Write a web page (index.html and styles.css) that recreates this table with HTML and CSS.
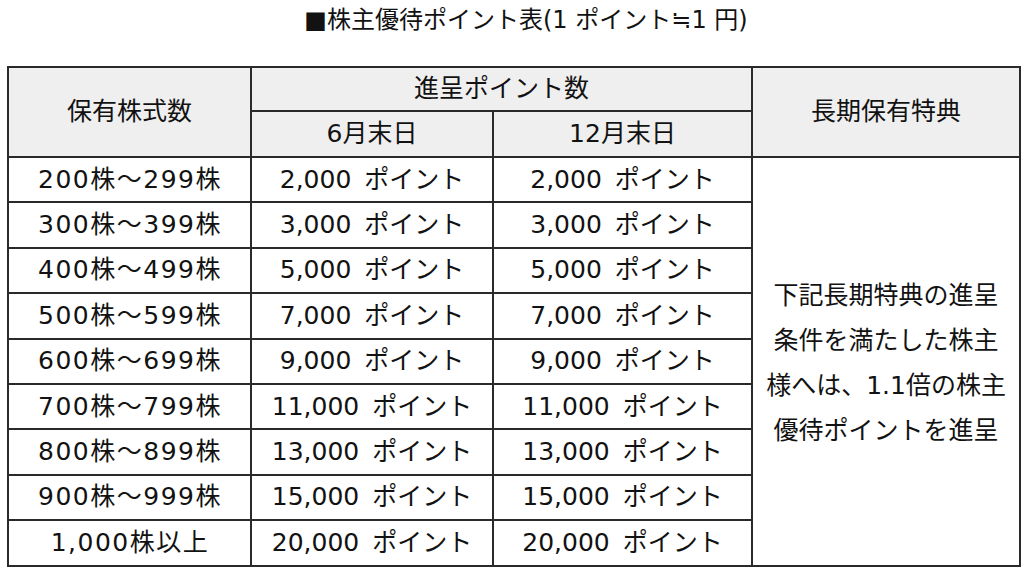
FILE: index.html
```html
<!DOCTYPE html>
<html lang="ja">
<head>
<meta charset="utf-8">
<link rel="stylesheet" href="styles.css">
</head>
<body>
<h1 class="title">■株主優待ポイント表(1 ポイント≒1 円)</h1>
<table class="points">
  <colgroup>
    <col class="c1"><col class="c2"><col class="c3"><col class="c4">
  </colgroup>
  <thead>
    <tr class="h1">
      <th rowspan="2">保有株式数</th>
      <th colspan="2">進呈ポイント数</th>
      <th rowspan="2">長期保有特典</th>
    </tr>
    <tr class="h2">
      <th>6月末日</th>
      <th>12月末日</th>
    </tr>
  </thead>
  <tbody>
    <tr><td class="qty">200株～299株</td><td class="pt">2,000 ポイント</td><td class="pt">2,000 ポイント</td>
      <td rowspan="9" class="bonus">下記長期特典の進呈<br>条件を満たした株主<br>様へは、1.1倍の株主<br>優待ポイントを進呈</td></tr>
    <tr><td class="qty">300株～399株</td><td class="pt">3,000 ポイント</td><td class="pt">3,000 ポイント</td></tr>
    <tr><td class="qty">400株～499株</td><td class="pt">5,000 ポイント</td><td class="pt">5,000 ポイント</td></tr>
    <tr><td class="qty">500株～599株</td><td class="pt">7,000 ポイント</td><td class="pt">7,000 ポイント</td></tr>
    <tr><td class="qty">600株～699株</td><td class="pt">9,000 ポイント</td><td class="pt">9,000 ポイント</td></tr>
    <tr><td class="qty">700株～799株</td><td class="pt">11,000 ポイント</td><td class="pt">11,000 ポイント</td></tr>
    <tr><td class="qty">800株～899株</td><td class="pt">13,000 ポイント</td><td class="pt">13,000 ポイント</td></tr>
    <tr><td class="qty">900株～999株</td><td class="pt">15,000 ポイント</td><td class="pt">15,000 ポイント</td></tr>
    <tr><td class="qty">1,000株以上</td><td class="pt">20,000 ポイント</td><td class="pt">20,000 ポイント</td></tr>
  </tbody>
</table>
</body>
</html>
```
FILE: styles.css
```css
html, body {
  margin: 0;
  padding: 0;
  background: #ffffff;
}
body {
  font-family: "DejaVu Sans", "Noto Sans CJK JP", sans-serif;
  color: #121212;
}
.title {
  margin: 0;
  padding-top: 5px;
  height: 66px;
  box-sizing: border-box;
  text-align: center;
  font-size: 24px;
  font-weight: 400;
  line-height: 30px;
  padding-left: 28px;
}
.points {
  margin-left: 7px;
  width: 1012px;
  border-collapse: collapse;
  table-layout: fixed;
  font-size: 25px;
}
.c1 { width: 243px; }
.c2 { width: 242px; }
.c3 { width: 259px; }
.c4 { width: 268px; }
.points th, .points td {
  border: 2px solid #2a2a2a;
  padding: 0;
  text-align: center;
  vertical-align: middle;
  font-weight: 400;
  line-height: 30px;
}
.points th {
  background: #efefef;
}
.points td.qty {
  letter-spacing: 1.5px;
  text-indent: 1px;
}
.points td.pt {
  word-spacing: 5px;
}
.h1 { height: 44px; }
.h2 { height: 46px; }
.points tbody tr { height: 45.4px; }
.points td.bonus {
  line-height: 45px;
  padding-top: 4px;
}
```
